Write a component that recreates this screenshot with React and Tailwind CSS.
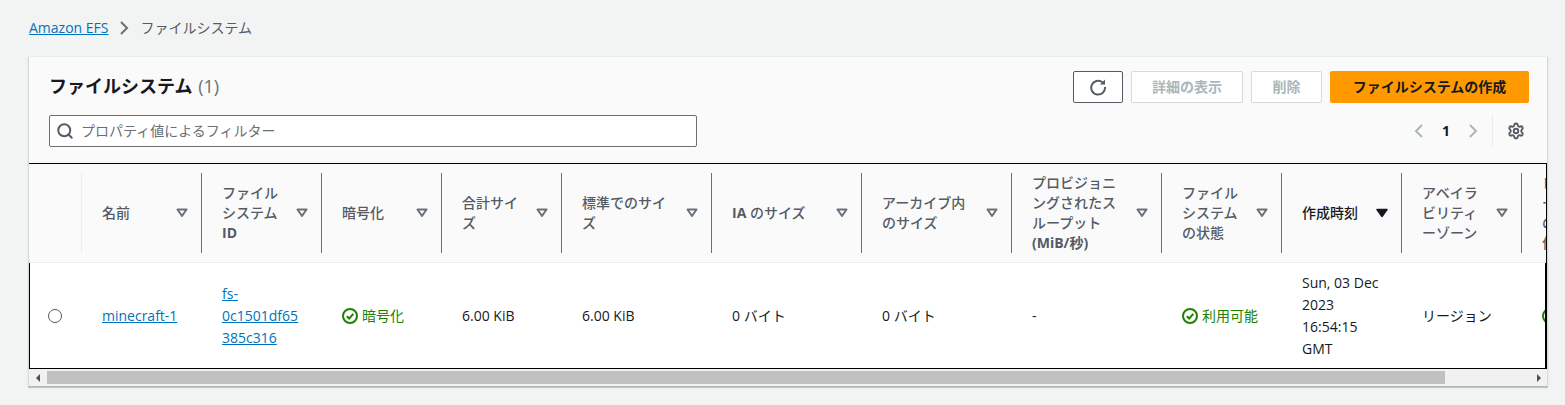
import React from "react";
import { Search, Settings } from "lucide-react";

const columns = [
  { w: "w-[120px]", lines: ["名前"] },
  { w: "w-[120px]", lines: ["ファイル", "システム", <b key="id">ID</b>] },
  { w: "w-[120px]", lines: ["暗号化"] },
  { w: "w-[120px]", lines: ["合計サイ", "ズ"] },
  { w: "w-[150px]", lines: ["標準でのサイ", "ズ"] },
  { w: "w-[150px]", lines: [<><b>IA</b> のサイズ</>] },
  { w: "w-[150px]", lines: ["アーカイブ内", "のサイズ"] },
  { w: "w-[150px]", lines: ["プロビジョニ", "ングされたス", "ループット", <b key="m">(MiB/秒)</b>] },
  { w: "w-[120px]", lines: ["ファイル", "システム", "の状態"] },
  { w: "w-[120px]", lines: ["作成時刻"], active: true },
  { w: "w-[120px]", lines: ["アベイラ", "ビリティ", "ーゾーン"] },
  { w: "w-[120px]", lines: ["レプリケ", "ーション", "の上書き", "保護"] },
];

function SortIcon({ active }) {
  return (
    <svg width="12" height="10" viewBox="0 0 12 10" className="shrink-0">
      {active ? (
        <path d="M1 1.5h10L6 8.5z" fill="#16191f" stroke="#16191f" strokeWidth="1.5" strokeLinejoin="round" />
      ) : (
        <path d="M1.5 1.5h9L6 8z" fill="none" stroke="#687078" strokeWidth="2" strokeLinejoin="round" />
      )}
    </svg>
  );
}

function Chevron({ left, color }) {
  return (
    <svg width="9" height="14" viewBox="0 0 9 14" fill="none" className="shrink-0">
      <path d={left ? "M8 1 2 7l6 6" : "M1 1l6 6-6 6"} stroke={color} strokeWidth="2" />
    </svg>
  );
}

function RefreshIcon() {
  return (
    <svg width="18" height="18" viewBox="0 0 18 18" fill="none">
      <path d="M13.4 4.2A6.9 6.9 0 1 0 16 9" stroke="#545b64" strokeWidth="2" />
      <path d="M16 1.5V6.5H11z" fill="#545b64" />
    </svg>
  );
}

function HeaderCell({ w, lines, active, last }) {
  return (
    <div className={`${w} shrink-0`}>
      <div className={`h-[80px] flex items-center justify-between pl-5 pr-[13px] ${last ? "" : "border-r border-[#687078]"}`}>
        <div className={`font-medium text-sm leading-5 whitespace-nowrap ${active ? "text-[#16191f]" : "text-[#545b64]"}`}>
          {lines.map((l, i) => (
            <div key={i}>{l}</div>
          ))}
        </div>
        <SortIcon active={active} />
      </div>
    </div>
  );
}

function CheckCircle() {
  return (
    <svg width="16" height="16" viewBox="0 0 16 16" fill="none" className="shrink-0">
      <circle cx="8" cy="8" r="7" stroke="#1d8102" strokeWidth="2" />
      <path d="M4.8 8.2 7.2 10.5 11.3 5.8" stroke="#1d8102" strokeWidth="2" />
    </svg>
  );
}

function Status({ children }) {
  return (
    <div className="flex items-center gap-1 text-[#1d8102] whitespace-nowrap">
      <CheckCircle />
      <span>{children}</span>
    </div>
  );
}

function Cell({ w, children }) {
  return <div className={`${w} shrink-0 px-5 flex items-center text-sm leading-[22px] text-[#16191f]`}>{children}</div>;
}

const Link = ({ children }) => <a className="text-[#0073bb] underline">{children}</a>;

export default function App() {
  return (
    <div
      className="w-[1565px] h-[405px] overflow-hidden bg-[#f2f3f3] text-[#16191f] pl-[28px] pt-[18px]"
      style={{ fontFamily: '"Open Sans", "Noto Sans CJK JP", sans-serif' }}
    >
      <nav className="flex items-center h-5 text-sm leading-5 pl-px">
        <a className="text-[#0073bb] underline">Amazon EFS</a>
        <span className="ml-[12px]">
          <Chevron color="#687078" />
        </span>
        <span className="ml-[11px] text-[#545b64]">ファイルシステム</span>
      </nav>

      <section className="mt-[18px] w-[1520px] bg-[#fafafa] border-l border-t border-r border-[#d5dbdb] border-t-[#eaeded] border-b border-b-[#aab7b8] shadow-[0_1px_1px_rgba(0,28,36,0.2)]">
        <div className="pl-5 pr-[18px] pt-[14px] pb-4">
          <div className="flex justify-between items-start h-8">
            <h1 className="text-lg leading-[30px] font-bold">
              ファイルシステム <span className="font-normal text-[#687078] ml-px">(1)</span>
            </h1>
            <div className="flex gap-2 text-sm font-bold leading-5">
              <button className="w-[50px] h-8 flex items-center justify-center border border-[#545b64] rounded-[2px] bg-white">
                <RefreshIcon />
              </button>
              <button className="w-[112px] h-8 border border-[#d5dbdb] rounded-[2px] bg-white text-[#aab7b8]">詳細の表示</button>
              <button className="w-[71px] h-8 border border-[#d5dbdb] rounded-[2px] bg-white text-[#aab7b8]">削除</button>
              <button className="w-[199px] h-8 rounded-[2px] bg-[#ff9900] text-[#16191f]">ファイルシステムの作成</button>
            </div>
          </div>
          <div className="flex justify-between items-center mt-3 h-8">
            <div className="w-[648px] h-8 flex items-center gap-[7px] pl-[6px] border border-[#687078] rounded-[2px] bg-white text-sm text-[#687078]">
              <Search size={18} strokeWidth={2.6} className="text-[#545b64]" />
              <span>プロパティ値によるフィルター</span>
            </div>
            <div className="flex items-center h-8 text-sm font-bold">
              <Chevron left color="#aab7b8" />
              <span className="w-[46px] text-center">1</span>
              <Chevron color="#aab7b8" />
              <div className="ml-[14px] w-px h-8 bg-[#eaeded]" />
              <Settings size={18} strokeWidth={2.5} className="ml-[14px] mr-[4px] text-[#545b64]" />
            </div>
          </div>
        </div>

        <div className="border-t border-black overflow-hidden border-r border-r-black">
          <div className="flex items-center h-[99px] border-b border-[#eaeded]">
            <div className="w-[53px] shrink-0">
              <div className="h-[80px] border-r border-[#eaeded]" />
            </div>
            {columns.map((c, i) => (
              <HeaderCell key={i} {...c} last={i === columns.length - 1} />
            ))}
          </div>
          <div className="flex h-[105px] bg-white border-l-2 border-l-black border-r border-r-black -ml-px overflow-hidden">
            <div className="w-[52px] shrink-0 flex items-center pl-[18px]">
              <span className="w-[14px] h-[14px] rounded-full border border-[#545b64] bg-white" />
            </div>
            <Cell w="w-[120px]"><Link>minecraft-1</Link></Cell>
            <Cell w="w-[120px]">
              <div>
                <div><Link>fs-</Link></div>
                <div><Link>0c1501df65</Link></div>
                <div><Link>385c316</Link></div>
              </div>
            </Cell>
            <Cell w="w-[120px]"><Status>暗号化</Status></Cell>
            <Cell w="w-[120px]">6.00 KiB</Cell>
            <Cell w="w-[150px]">6.00 KiB</Cell>
            <Cell w="w-[150px]">0 バイト</Cell>
            <Cell w="w-[150px]">0 バイト</Cell>
            <Cell w="w-[150px]">-</Cell>
            <Cell w="w-[120px]"><Status>利用可能</Status></Cell>
            <Cell w="w-[120px]">
              <div>
                <div>Sun, 03 Dec</div>
                <div>2023</div>
                <div>16:54:15</div>
                <div>GMT</div>
              </div>
            </Cell>
            <Cell w="w-[120px]">リージョン</Cell>
            <Cell w="w-[120px]"><Status>有効</Status></Cell>
          </div>
        </div>

        <div className="flex items-center h-[18px] border-t border-black bg-[#f1f1f1]">
          <div className="w-[18px] flex justify-center">
            <span className="w-0 h-0 border-y-[4px] border-y-transparent border-r-[4px] border-r-[#505050]" />
          </div>
          <div className="w-[1398px] h-[13px] bg-[#c1c1c1]" />
          <div className="flex-1" />
          <div className="w-[17px] flex justify-center">
            <span className="w-0 h-0 border-y-[4px] border-y-transparent border-l-[4px] border-l-[#505050]" />
          </div>
        </div>
      </section>
    </div>
  );
}
